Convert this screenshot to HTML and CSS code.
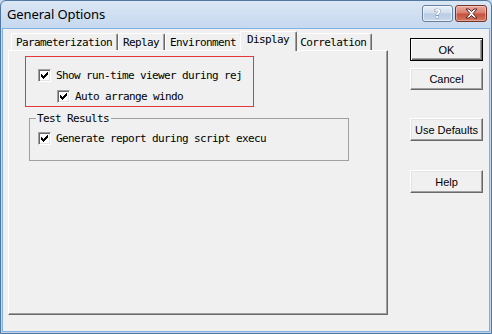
FILE: index.html
```html
<!DOCTYPE html>
<html>
<head>
<meta charset="utf-8">
<link rel="stylesheet" href="styles.css">
</head>
<body>
<div class="window">
  <div class="titlebar">
    <span class="title">General Options</span>
    <div class="caption-btns">
      <div class="cbtn help"><span class="qmark">?</span></div>
      <div class="cbtn close">
        <svg width="17" height="11" viewBox="0 0 17 11"><path d="M3 1h3l2.5 2.5L11 1h3l-4 4.5 4 4.5h-3L8.5 7.5 6 10H3l4-4.5z" fill="#fff" stroke="#5a2320" stroke-width="1" stroke-linejoin="round"/></svg>
      </div>
    </div>
  </div>
  <div class="client">
    <div class="tabarea">
      <div class="tabs">
        <div class="tab">Parameterization</div>
        <div class="tab">Replay</div>
        <div class="tab">Environment</div>
        <div class="tab active">Display</div>
        <div class="tab">Correlation</div>
      </div>
      <div class="panel">
        <div class="focusbox">
          <div class="check">
            <span class="box"><svg width="7" height="7" viewBox="0 0 7 7"><path d="M0 2h1v3H0zM1 3h1v3H1zM2 4h1v3H2zM3 3h1v3H3zM4 2h1v3H4zM5 1h1v3H5zM6 0h1v3H6z" fill="#000"/></svg></span>
            <span class="lbl clip">Show run-time viewer during rej</span>
          </div>
          <div class="check sub">
            <span class="box"><svg width="7" height="7" viewBox="0 0 7 7"><path d="M0 2h1v3H0zM1 3h1v3H1zM2 4h1v3H2zM3 3h1v3H3zM4 2h1v3H4zM5 1h1v3H5zM6 0h1v3H6z" fill="#000"/></svg></span>
            <span class="lbl">Auto arrange windo</span>
          </div>
        </div>
        <fieldset class="group">
          <legend>Test Results</legend>
          <div class="check">
            <span class="box"><svg width="7" height="7" viewBox="0 0 7 7"><path d="M0 2h1v3H0zM1 3h1v3H1zM2 4h1v3H2zM3 3h1v3H3zM4 2h1v3H4zM5 1h1v3H5zM6 0h1v3H6z" fill="#000"/></svg></span>
            <span class="lbl">Generate report during script execu</span>
          </div>
        </fieldset>
      </div>
    </div>
    <div class="btncol">
      <button class="btn default">OK</button>
      <button class="btn cancel">Cancel</button>
      <button class="btn defaults">Use Defaults</button>
      <button class="btn helpbtn">Help</button>
    </div>
  </div>
</div>
</body>
</html>
```

FILE: styles.css
```css
* { box-sizing: border-box; }
html, body { margin: 0; padding: 0; }
body { width: 492px; height: 334px; overflow: hidden; background: #c4d7ee; }

.window {
  width: 492px; height: 334px;
  display: flex; flex-direction: column;
  background: linear-gradient(180deg, #dae6f4 0, #c6d9ef 27px, #c0d5ed 100%);
  border: 1px solid #51789f;
  border-radius: 6px 6px 0 0;
  padding: 0 1px 1px 1px;
}

.titlebar {
  height: 27px; flex: none;
  display: flex; align-items: flex-start;
  padding-left: 5px;
}
.title {
  font-family: "Noto Sans", sans-serif;
  font-size: 13px; letter-spacing: -0.1px;
  line-height: 16px; margin-top: 5px;
  color: #000;
}
.caption-btns { margin-left: auto; margin-right: 3px; margin-top: 4px; display: flex; gap: 2px; }
.cbtn {
  height: 17px; border-radius: 3px;
  display: flex; align-items: center; justify-content: center;
}
.help {
  width: 31px;
  background: linear-gradient(180deg, #e9f0f8 0%, #d1deee 45%, #b9cce4 55%, #c9d9ed 100%);
  border: 1px solid #6a80a0;
  box-shadow: inset 0 0 0 1px rgba(255,255,255,0.6);
}
.qmark {
  font-family: "DejaVu Sans", sans-serif; font-weight: bold;
  font-size: 12px; line-height: 12px; color: #fff;
  -webkit-text-stroke: 0.6px #3f5677;
  paint-order: stroke fill;
}
.close {
  width: 32px;
  background: linear-gradient(180deg, #e9a99c 0%, #d9806f 45%, #c7503f 55%, #d07a5f 100%);
  border: 1px solid #7a3227;
  box-shadow: inset 0 0 0 1px rgba(255,255,255,0.35);
}

.client {
  flex: 1;
  background: #f0f0f0;
  border: 1px solid #7fb2e0;
  display: flex;
  padding: 2px 0 0 5px;
}

.tabarea { width: 380px; display: flex; flex-direction: column; }
.tabs { height: 19px; display: flex; align-items: flex-end; padding-left: 3px; position: relative; z-index: 2; }
.tab {
  height: 17px;
  font-family: "DejaVu Sans Mono", monospace;
  font-size: 11px; letter-spacing: -0.62px;
  line-height: 13px;
  padding: 2px 5px 0 4px;
  border-top: 1px solid #fff; border-left: 1px solid #fff;
  border-right: 1px solid #696969;
  box-shadow: inset -1px 0 #a0a0a0;
  border-radius: 2px 2px 0 0;
  background: #f0f0f0;
  color: #000;
  white-space: nowrap;
}
.tab.active {
  height: 20px;
  margin: 0 -2px -1px -2px;
  padding: 1px 7px 0 6px;
  position: relative;
}
.panel {
  height: 265px;
  background: #f0f0f0;
  border: 1px solid; border-color: #fff #696969 #696969 #fff;
  box-shadow: inset -1px -1px #a0a0a0;
  padding: 5px 0 0 16px;
}

.focusbox {
  width: 229px; height: 51px;
  border: 1px solid #e4383d;
  padding: 11px 0 0 12px;
  display: flex; flex-direction: column; gap: 7px;
}
.check { display: flex; align-items: center; gap: 5px; height: 14px; }
.check.sub { padding-left: 19px; }
.box {
  width: 13px; height: 13px; flex: none;
  background: #fff;
  border: 1px solid; border-color: #a0a0a0 #fff #fff #a0a0a0;
  box-shadow: inset 1px 1px #696969, inset -1px -1px #e3e3e3;
  padding: 2px 0 0 2px;
  display: flex;
}
.box svg { display: block; shape-rendering: crispEdges; }
.lbl {
  font-family: "DejaVu Sans Mono", monospace;
  font-size: 11px; letter-spacing: -0.62px;
  line-height: 13px; color: #000;
  white-space: nowrap;
}
.lbl.clip { width: 185px; overflow: hidden; }

.group {
  margin: 5px 0 0 4px; padding: 6px 0 0 8px;
  width: 320px; height: 49px;
  border: 1px solid #a0a0a0;
  min-width: 0;
}
.group legend {
  font-family: "DejaVu Sans Mono", monospace;
  font-size: 11px; letter-spacing: -0.62px;
  line-height: 13px; color: #000;
  padding: 0 2px 0 1px; margin-left: -2px;
}

.btncol { display: flex; flex-direction: column; margin-left: 22px; padding-top: 7px; }
.btn {
  width: 73px; height: 23px; padding: 0;
  background: #f0f0f0;
  border: 1px solid; border-color: #fff #696969 #696969 #fff;
  box-shadow: inset -1px -1px #a0a0a0, inset 1px 1px #e3e3e3;
  font-family: "Liberation Sans", Arial, sans-serif;
  font-size: 11px; color: #000;
  display: flex; align-items: center; justify-content: center;
  border-radius: 0;
}
.btn.default {
  border: 1px solid #000;
  box-shadow: inset 1px 1px #fff, inset -1px -1px #696969, inset -2px -2px #a0a0a0;
}
.btn.cancel { margin-top: 7px; height: 22px; }
.btn.defaults { margin-top: 28px; }
.btn.helpbtn { margin-top: 29px; }
```
